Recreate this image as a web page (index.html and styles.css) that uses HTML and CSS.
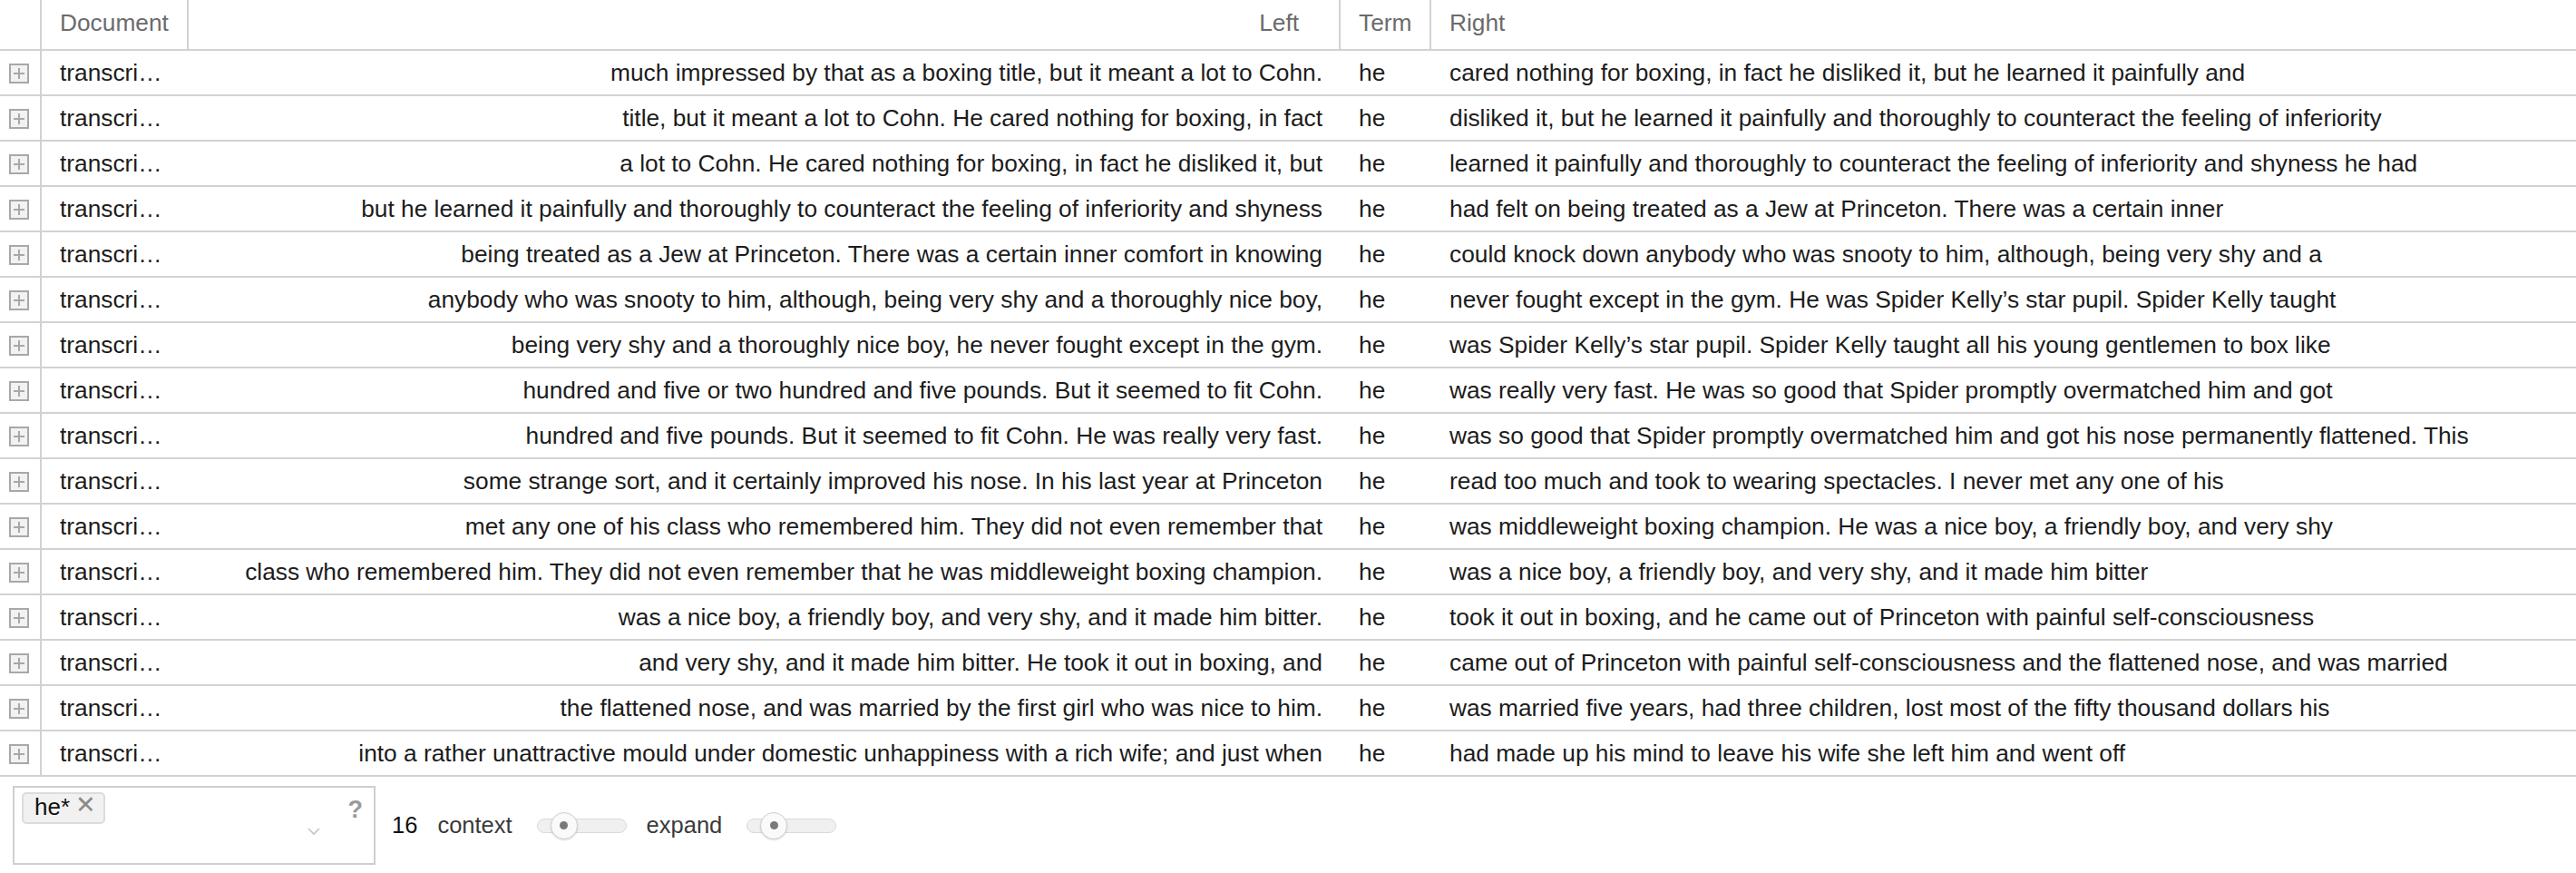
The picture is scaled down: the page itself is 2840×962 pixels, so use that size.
FILE: index.html
```html
<!DOCTYPE html>
<html>
<head>
<meta charset="utf-8">
<link rel="stylesheet" href="styles.css">
</head>
<body>
<div class="grid">
  <div class="row head">
    <div class="cell gut"></div>
    <div class="cell doc">Document</div>
    <div class="cell left">Left</div>
    <div class="cell term">Term</div>
    <div class="cell right">Right</div>
  </div>
  <div class="row"><div class="cell gut"><span class="exp"></span></div><div class="cell doc">transcri…</div><div class="cell left">much impressed by that as a boxing title, but it meant a lot to Cohn.</div><div class="cell term">he</div><div class="cell right">cared nothing for boxing, in fact he disliked it, but he learned it painfully and</div></div>
  <div class="row"><div class="cell gut"><span class="exp"></span></div><div class="cell doc">transcri…</div><div class="cell left">title, but it meant a lot to Cohn. He cared nothing for boxing, in fact</div><div class="cell term">he</div><div class="cell right">disliked it, but he learned it painfully and thoroughly to counteract the feeling of inferiority</div></div>
  <div class="row"><div class="cell gut"><span class="exp"></span></div><div class="cell doc">transcri…</div><div class="cell left">a lot to Cohn. He cared nothing for boxing, in fact he disliked it, but</div><div class="cell term">he</div><div class="cell right">learned it painfully and thoroughly to counteract the feeling of inferiority and shyness he had</div></div>
  <div class="row"><div class="cell gut"><span class="exp"></span></div><div class="cell doc">transcri…</div><div class="cell left">but he learned it painfully and thoroughly to counteract the feeling of inferiority and shyness</div><div class="cell term">he</div><div class="cell right">had felt on being treated as a Jew at Princeton. There was a certain inner</div></div>
  <div class="row"><div class="cell gut"><span class="exp"></span></div><div class="cell doc">transcri…</div><div class="cell left">being treated as a Jew at Princeton. There was a certain inner comfort in knowing</div><div class="cell term">he</div><div class="cell right">could knock down anybody who was snooty to him, although, being very shy and a</div></div>
  <div class="row"><div class="cell gut"><span class="exp"></span></div><div class="cell doc">transcri…</div><div class="cell left">anybody who was snooty to him, although, being very shy and a thoroughly nice boy,</div><div class="cell term">he</div><div class="cell right">never fought except in the gym. He was Spider Kelly’s star pupil. Spider Kelly taught</div></div>
  <div class="row"><div class="cell gut"><span class="exp"></span></div><div class="cell doc">transcri…</div><div class="cell left">being very shy and a thoroughly nice boy, he never fought except in the gym.</div><div class="cell term">he</div><div class="cell right">was Spider Kelly’s star pupil. Spider Kelly taught all his young gentlemen to box like</div></div>
  <div class="row"><div class="cell gut"><span class="exp"></span></div><div class="cell doc">transcri…</div><div class="cell left">hundred and five or two hundred and five pounds. But it seemed to fit Cohn.</div><div class="cell term">he</div><div class="cell right">was really very fast. He was so good that Spider promptly overmatched him and got</div></div>
  <div class="row"><div class="cell gut"><span class="exp"></span></div><div class="cell doc">transcri…</div><div class="cell left">hundred and five pounds. But it seemed to fit Cohn. He was really very fast.</div><div class="cell term">he</div><div class="cell right">was so good that Spider promptly overmatched him and got his nose permanently flattened. This</div></div>
  <div class="row"><div class="cell gut"><span class="exp"></span></div><div class="cell doc">transcri…</div><div class="cell left">some strange sort, and it certainly improved his nose. In his last year at Princeton</div><div class="cell term">he</div><div class="cell right">read too much and took to wearing spectacles. I never met any one of his</div></div>
  <div class="row"><div class="cell gut"><span class="exp"></span></div><div class="cell doc">transcri…</div><div class="cell left">met any one of his class who remembered him. They did not even remember that</div><div class="cell term">he</div><div class="cell right">was middleweight boxing champion. He was a nice boy, a friendly boy, and very shy</div></div>
  <div class="row"><div class="cell gut"><span class="exp"></span></div><div class="cell doc">transcri…</div><div class="cell left">class who remembered him. They did not even remember that he was middleweight boxing champion.</div><div class="cell term">he</div><div class="cell right">was a nice boy, a friendly boy, and very shy, and it made him bitter</div></div>
  <div class="row"><div class="cell gut"><span class="exp"></span></div><div class="cell doc">transcri…</div><div class="cell left">was a nice boy, a friendly boy, and very shy, and it made him bitter.</div><div class="cell term">he</div><div class="cell right">took it out in boxing, and he came out of Princeton with painful self-consciousness</div></div>
  <div class="row"><div class="cell gut"><span class="exp"></span></div><div class="cell doc">transcri…</div><div class="cell left">and very shy, and it made him bitter. He took it out in boxing, and</div><div class="cell term">he</div><div class="cell right">came out of Princeton with painful self-consciousness and the flattened nose, and was married</div></div>
  <div class="row"><div class="cell gut"><span class="exp"></span></div><div class="cell doc">transcri…</div><div class="cell left">the flattened nose, and was married by the first girl who was nice to him.</div><div class="cell term">he</div><div class="cell right">was married five years, had three children, lost most of the fifty thousand dollars his</div></div>
  <div class="row"><div class="cell gut"><span class="exp"></span></div><div class="cell doc">transcri…</div><div class="cell left">into a rather unattractive mould under domestic unhappiness with a rich wife; and just when</div><div class="cell term">he</div><div class="cell right">had made up his mind to leave his wife she left him and went off</div></div>
</div>
<div class="footer">
  <div class="search">
    <span class="chip">he* <span class="chip-x">✕</span></span>
    <span class="spacer"></span>
    <svg class="chev" width="16" height="10" viewBox="0 0 16 10"><polyline points="2,2 8,8 14,2" fill="none" stroke="#c4c4c4" stroke-width="1.6"/></svg>
    <span class="help">?</span>
  </div>
  <span class="count">16</span>
  <span class="lbl">context</span>
  <div class="slider"><span class="knob"><span class="dot"></span></span></div>
  <span class="lbl">expand</span>
  <div class="slider"><span class="knob k2"><span class="dot"></span></span></div>
</div>
</body>
</html>
```
FILE: styles.css
```css
html, body {
  margin: 0;
  padding: 0;
  background: #fff;
}
body {
  font-family: "Liberation Sans", Arial, sans-serif;
  font-size: 26.3px;
  color: #1c1c1c;
  width: 2840px;
  height: 962px;
  overflow: hidden;
}
.row {
  display: grid;
  grid-template-columns: 46px 162px 1270px 100px 1fr;
  height: 48px;
  border-bottom: 2px solid #d2d2d2;
}
.row.head {
  height: 54px;
  color: #6b6b6b;
}
.cell {
  box-sizing: border-box;
  display: flex;
  align-items: center;
  padding: 0 20px;
  white-space: nowrap;
  overflow: hidden;
}
.gut {
  padding: 0;
  justify-content: center;
  border-right: 2px solid #d2d2d2;
}
.head .doc,
.head .left,
.head .term {
  border-right: 2px solid #d2d2d2;
}
.head .cell {
  padding-bottom: 4px;
}
.left {
  justify-content: flex-end;
}
.head .left {
  padding-right: 44px;
}
.exp {
  box-sizing: border-box;
  width: 22px;
  height: 22px;
  border: 2px solid #a8a8a8;
  background: #f2f2f2;
  position: relative;
  margin-left: -2px;
  margin-top: 2px;
}
.exp::before,
.exp::after {
  content: "";
  position: absolute;
  background: #a8a8a8;
}
.exp::before {
  left: 3px;
  right: 3px;
  top: 8px;
  height: 2px;
}
.exp::after {
  top: 3px;
  bottom: 3px;
  left: 8px;
  width: 2px;
}
.footer {
  display: flex;
  align-items: center;
  padding: 10px 0 0 14px;
  font-size: 25.5px;
}
.search {
  box-sizing: border-box;
  width: 400px;
  height: 87px;
  border: 2px solid #cfcfcf;
  display: flex;
  align-items: flex-start;
  padding: 5px 12px 0 8px;
}
.chip {
  box-sizing: border-box;
  height: 35px;
  display: flex;
  align-items: center;
  padding: 0 8px 2px 12px;
  background: #f1f1f1;
  border: 2px solid #dcdcdc;
  border-radius: 5px;
  font-size: 26px;
  color: #111;
}
.chip-x {
  font-size: 27px;
  color: #8a8a8a;
  margin-left: 6px;
  margin-top: -6px;
}
.spacer {
  flex: 1;
}
.chev {
  align-self: center;
  margin-right: 30px;
  margin-top: 8px;
}
.help {
  font-weight: bold;
  color: #9a9a9a;
  font-size: 27px;
  margin-top: 4px;
}
.count {
  margin-left: 18px;
  color: #111;
}
.lbl {
  margin-left: 22px;
  color: #3a3a3a;
}
.slider {
  box-sizing: border-box;
  position: relative;
  width: 99px;
  height: 16px;
  margin-left: 27px;
  background: #f0f0f0;
  border: 1px solid #dadada;
  border-radius: 8px;
}
.knob {
  box-sizing: border-box;
  position: absolute;
  left: 14px;
  top: -8px;
  width: 30px;
  height: 30px;
  border-radius: 50%;
  background: #fafafa;
  border: 1px solid #d0d0d0;
  box-shadow: 0 1px 2px rgba(0,0,0,0.15);
  display: flex;
  align-items: center;
  justify-content: center;
}
.dot {
  width: 9px;
  height: 9px;
  border-radius: 50%;
  background: #7a7a7a;
}
```
